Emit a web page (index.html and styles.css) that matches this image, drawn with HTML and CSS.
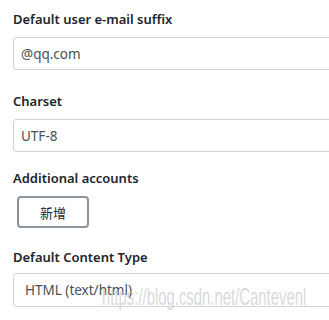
FILE: index.html
```html
<!DOCTYPE html>
<html lang="en">
  <head>
    <meta charset="UTF-8" />
    <meta name="viewport" content="width=device-width, initial-scale=1.0" />
    <title>Settings</title>
    <link rel="stylesheet" href="styles.css">
  </head>
  <body>
    <form class="settings-form">
      <div class="field field-first">
        <label class="field-label">Default user e-mail suffix</label>
        <input class="text-input" type="text" value="@qq.com" />
      </div>
      <div class="field field-tight">
        <label class="field-label">Charset</label>
        <input class="text-input" type="text" value="UTF-8" />
      </div>
      <div class="field">
        <label class="field-label">Additional accounts</label>
        <button type="button" class="add-button">新增</button>
      </div>
      <div class="field">
        <label class="field-label field-label-close">Default Content Type</label>
        <div class="select-box">HTML (text/html)</div>
      </div>
    </form>
    <div class="watermark">https://blog.csdn.net/Cantevenl</div>
  </body>
</html>
```

FILE: styles.css
```css
html, body {
  margin: 0;
  padding: 0;
  width: 100%;
  height: 100%;
  overflow: hidden;
  background: #FFFFFF;
}

body {
  position: relative;
  font-family: "Noto Sans", "Open Sans", Arial, sans-serif;
  color: #212529;
}

.settings-form {
  width: 380px;
  padding: 9px 0 0 13px;
  box-sizing: border-box;
}

.field {
  margin-bottom: 19px;
}
.field-first {
  margin-bottom: 21px;
}
.field-tight {
  margin-bottom: 16px;
}

.field-label {
  display: block;
  font-size: 13px;
  line-height: 20px;
  font-weight: 600;
  margin-bottom: 8px;
}
.field-label-close {
  margin-bottom: 6px;
}

.text-input,
.select-box {
  display: block;
  width: 100%;
  height: 33px;
  box-sizing: border-box;
  border: 1px solid #CED4DA;
  border-radius: 3px;
  padding: 0 7px;
  font-family: inherit;
  font-size: 13.5px;
  color: #495057;
  background: #FFFFFF;
  outline: none;
}

.select-box {
  display: flex;
  align-items: center;
  height: 34px;
  padding-left: 11px;
}

.add-button {
  display: block;
  margin-left: 4px;
  width: 72px;
  height: 32px;
  border: 2px solid #8C959D;
  border-radius: 4px;
  background: #FFFFFF;
  font-family: "Noto Sans CJK SC", sans-serif;
  font-size: 13px;
  color: #212529;
  padding: 0;
}

.watermark {
  position: absolute;
  left: 102px;
  top: 283px;
  font-family: "Liberation Sans", Arial, sans-serif;
  font-size: 24px;
  line-height: 28px;
  color: rgba(195, 195, 195, 0.65);
  transform-origin: left top;
  transform: scaleX(0.62);
  white-space: nowrap;
  pointer-events: none;
}
```
